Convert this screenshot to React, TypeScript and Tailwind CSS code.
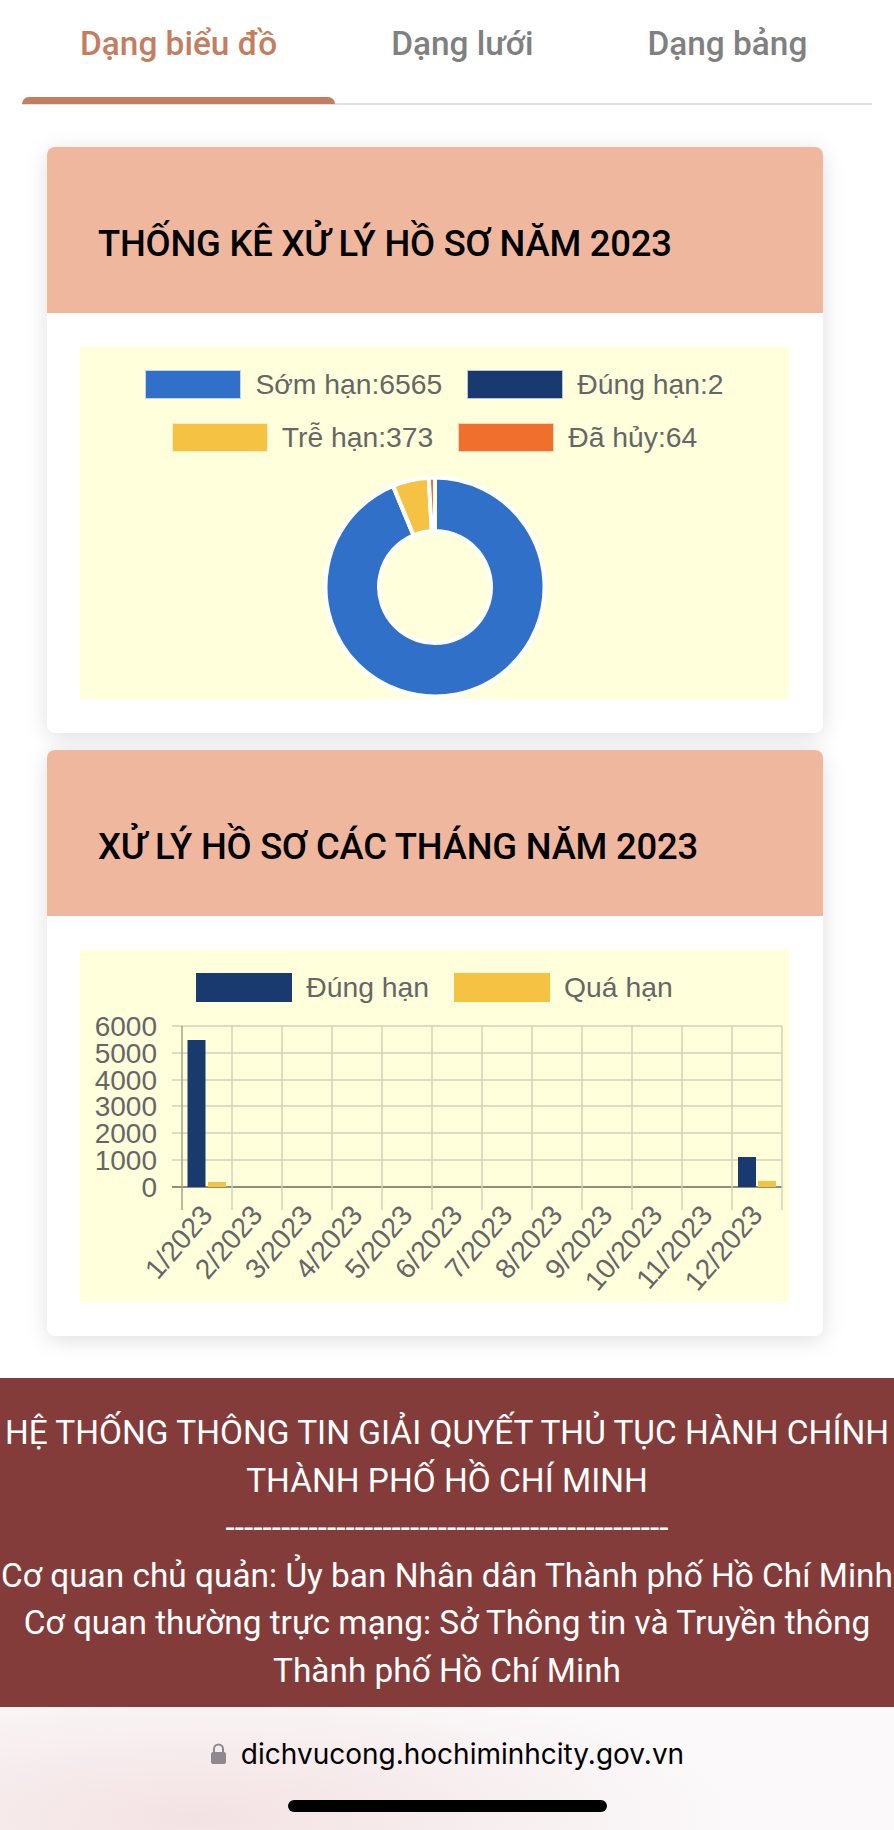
import React from 'react';

const LABEL_FONT = '"Liberation Sans", Arial, sans-serif';

const DONUT = [
  { value: 6565, color: '#3170c8' },
  { value: 2, color: '#183a6e' },
  { value: 373, color: '#f5c244' },
  { value: 64, color: '#f06f2c' },
];

const MONTHS = Array.from({ length: 12 }, (_, i) => `${i + 1}/2023`);
const GRID_X = Array.from({ length: 13 }, (_, i) => 182 + i * 50);
const GRID_Y = [1026, 1053, 1080, 1106, 1133, 1160, 1187];

function arcPath(start: number, end: number, r: number, inner: number, cx: number, cy: number) {
  const pt = (a: number, rad: number) => `${cx + rad * Math.sin(a)} ${cy - rad * Math.cos(a)}`;
  const large = end - start > Math.PI ? 1 : 0;
  return `M${pt(start, r)}A${r} ${r} 0 ${large} 1 ${pt(end, r)}L${pt(end, inner)}A${inner} ${inner} 0 ${large} 0 ${pt(start, inner)}Z`;
}

function Donut() {
  const total = DONUT.reduce((s, d) => s + d.value, 0);
  let acc = 0;
  return (
    <svg width="224" height="224" viewBox="0 0 224 224" className="block mx-auto">
      {DONUT.map(d => {
        const start = (acc / total) * Math.PI * 2;
        acc += d.value;
        const end = (acc / total) * Math.PI * 2;
        return <path key={d.color} d={arcPath(start, end, 109.5, 56, 112, 112)} fill={d.color} stroke="#ffffff" strokeWidth="4" />;
      })}
    </svg>
  );
}

function BarChart() {
  return (
    <svg width="709" height="300" viewBox="80 1002 709 300" className="block">
      {GRID_Y.map((y, i) => (
        <g key={y}>
          <line x1="172" x2="782" y1={y} y2={y} stroke={i === 6 ? '#8f8f78' : '#d2d2b8'} strokeWidth={i === 6 ? 2 : 1.5} />
          <text x="157" y={y + 10} textAnchor="end" fontSize="28" fill="#666" fontFamily={LABEL_FONT}>{6000 - i * 1000}</text>
        </g>
      ))}
      {GRID_X.map((x, i) => (
        <line key={x} x1={x} x2={x} y1="1026" y2="1210" stroke={i === 0 ? '#a3a38c' : '#d2d2b8'} strokeWidth="1.5" />
      ))}
      <rect x="187.5" y="1040" width="18" height="147" fill="#183a6e" />
      <rect x="208" y="1182" width="18" height="5" fill="#f5c244" />
      <rect x="738" y="1157" width="18" height="30" fill="#183a6e" />
      <rect x="758" y="1181" width="18" height="6" fill="#f5c244" />
      {MONTHS.map((m, i) => (
        <text key={m} transform={`translate(${214 + i * 50} 1216) rotate(-49)`} textAnchor="end" fontSize="28" fill="#666" fontFamily={LABEL_FONT}>{m}</text>
      ))}
    </svg>
  );
}

function Legend({ color, label, outlined }: { color: string; label: string; outlined?: boolean }) {
  return (
    <div className="flex items-center gap-[14px]">
      <span className={`block w-[96px] h-[29px] ${outlined ? 'border border-white/70' : ''}`} style={{ backgroundColor: color }} />
      <span className="text-[28.3px] leading-[29px] text-[#666] whitespace-nowrap font-['Liberation_Sans',Arial,sans-serif]">{label}</span>
    </div>
  );
}

function Card({ title, children }: { title: string; children: React.ReactNode }) {
  return (
    <div className="bg-white rounded-lg overflow-hidden shadow-[0_4px_22px_rgba(0,0,0,0.13)]">
      <div className="h-[166px] bg-[#efb79e] flex items-center pl-[51px] pt-[28px]">
        <h2 className="text-[36.4px] font-medium text-black tracking-[-0.2px] whitespace-nowrap font-['Roboto',sans-serif]">{title}</h2>
      </div>
      <div className="p-[34px] pl-[33px]">
        <div className="h-[352px] bg-[#ffffdc] pt-[23px]">{children}</div>
      </div>
    </div>
  );
}

export default function App() {
  return (
    <div className="w-[894px] h-[1830px] overflow-hidden bg-white relative font-['Roboto',sans-serif]">
      <div className="mx-[22px] w-[850px] h-[105px] flex border-b-2 border-[#e2e2e2]">
        <div className="flex flex-col h-[104px] text-[33.4px] leading-[42px] font-medium text-[#c27e5f] whitespace-nowrap">
          <div className="px-[58px] pt-[23px] h-[97px]">Dạng biểu đồ</div>
          <div className="h-[7px] bg-[#c27e5f] rounded-t-lg" />
        </div>
        <div className="pl-[56px] pr-[57px] pt-[23px] text-[33.4px] leading-[42px] font-medium text-[#808080] whitespace-nowrap">Dạng lưới</div>
        <div className="pl-[57px] pt-[23px] text-[33.4px] leading-[42px] font-medium text-[#808080] whitespace-nowrap">Dạng bảng</div>
      </div>

      <div className="mt-[42px] mx-[47px] w-[776px] flex flex-col gap-[17px]">
        <Card title="THỐNG KÊ XỬ LÝ HỒ SƠ NĂM 2023">
          <div className="flex justify-center gap-[25px]">
            <Legend color="#3170c8" label="Sớm hạn:6565" outlined />
            <Legend color="#183a6e" label="Đúng hạn:2" outlined />
          </div>
          <div className="flex justify-center gap-[25px] mt-[24px]">
            <Legend color="#f5c244" label="Trễ hạn:373" outlined />
            <Legend color="#f06f2c" label="Đã hủy:64" outlined />
          </div>
          <div className="mt-[23px]"><Donut /></div>
        </Card>
        <Card title="XỬ LÝ HỒ SƠ CÁC THÁNG NĂM 2023">
          <div className="flex justify-center gap-[25px]">
            <Legend color="#183a6e" label="Đúng hạn" />
            <Legend color="#f5c244" label="Quá hạn" />
          </div>
          <BarChart />
        </Card>
      </div>

      <div className="mt-[42px] h-[329px] bg-[#843c3b] pt-[31px] text-white text-center text-[33.4px] leading-[47.6px] whitespace-nowrap overflow-hidden flex flex-col items-center">
        <div>HỆ THỐNG THÔNG TIN GIẢI QUYẾT THỦ TỤC HÀNH CHÍNH</div>
        <div>THÀNH PHỐ HỒ CHÍ MINH</div>
        <div>------------------------------------------------</div>
        <div>Cơ quan chủ quản: Ủy ban Nhân dân Thành phố Hồ Chí Minh</div>
        <div>Cơ quan thường trực mạng: Sở Thông tin và Truyền thông</div>
        <div>Thành phố Hồ Chí Minh</div>
      </div>

      <div className="h-[123px] bg-[radial-gradient(ellipse_60%_120%_at_22%_90%,#f4e2e3_0%,#f7eeef_55%,#fbf9fa_100%)] flex flex-col items-center">
        <div className="mt-[29px] flex items-center gap-[14px] h-[36px]">
          <svg width="17" height="22" viewBox="0 0 17 22">
            <path d="M4 9V6a4.500 4.500 0 0 1 9 0v3" fill="none" stroke="#8c8a8f" strokeWidth="2" />
            <rect x="1" y="9" width="15" height="12" rx="2" fill="#8c8a8f" />
          </svg>
          <span className="text-[28px] text-black whitespace-nowrap font-['Inter',sans-serif]">dichvucong.hochiminhcity.gov.vn</span>
        </div>
        <div className="mt-[28px] w-[319px] h-[12px] rounded-full bg-black" />
      </div>
    </div>
  );
}
